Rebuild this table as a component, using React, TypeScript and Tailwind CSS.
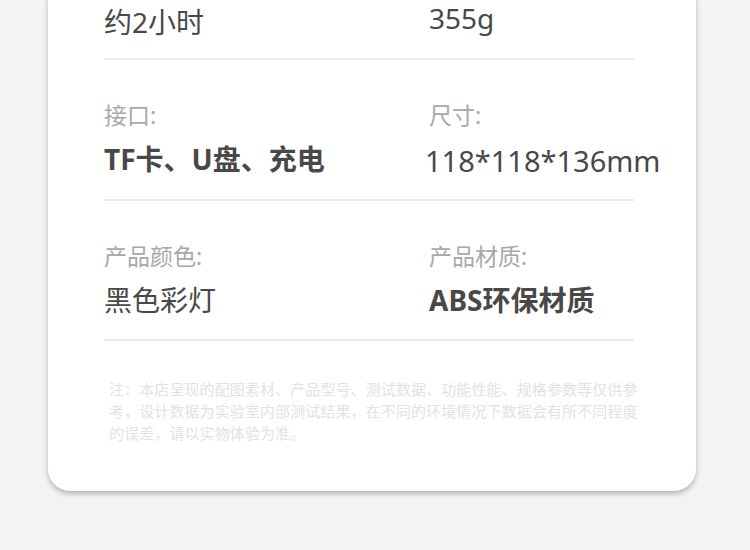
import React from "react";

const font = { fontFamily: '"Noto Sans", "Noto Sans CJK SC", sans-serif' };

function Row({
  l1,
  v1,
  l2,
  v2,
  bold1,
  bold2,
  big2,
  pb,
}: {
  l1: string;
  v1: string;
  l2: string;
  v2: string;
  bold1?: boolean;
  bold2?: boolean;
  big2?: boolean;
  pb: string;
}) {
  return (
    <div className={`grid grid-cols-[325px_1fr] border-b-2 border-[#ebebeb] pt-[43px] ${pb}`}>
      <div className="flex flex-col">
        <div className="text-[23px] leading-[24px] text-[#a8a8a8]">{l1}</div>
        <div
          className={`mt-[17px] text-[28px] leading-[30px] text-[#484848] whitespace-nowrap ${
            bold1 ? "font-bold" : ""
          }`}
        >
          {v1}
        </div>
      </div>
      <div className="flex flex-col">
        <div className="text-[23px] leading-[24px] text-[#a8a8a8]">{l2}</div>
        <div
          className={`leading-[30px] text-[#484848] whitespace-nowrap ${
            bold2 ? "font-bold" : ""
          } ${big2 ? "text-[29px] ml-[-4px] mt-[19px]" : "mt-[17px] text-[28px]"}`}
        >
          {v2}
        </div>
      </div>
    </div>
  );
}

export default function App() {
  return (
    <div className="w-[750px] h-[550px] bg-[#f3f3f3] overflow-hidden" style={font}>
      <div className="ml-[48px] mr-[54px] mt-[-20px] bg-white rounded-[22px] shadow-[0_3px_5px_rgba(0,0,0,0.25)] pl-[56px] pr-[62px] pb-[47px]">
        <div className="grid grid-cols-[325px_1fr] border-b-2 border-[#ebebeb] pt-[27px] pb-[21px]">
          <div className="text-[28px] leading-[30px] text-[#484848] whitespace-nowrap">约2小时</div>
          <div className="text-[28px] leading-[30px] text-[#484848] whitespace-nowrap mt-[-4px]">355g</div>
        </div>
        <Row l1="接口:" v1="TF卡、U盘、充电" l2="尺寸:" v2="118*118*136mm" bold1 big2 pb="pb-[23px]" />
        <Row l1="产品颜色:" v1="黑色彩灯" l2="产品材质:" v2="ABS环保材质" bold2 pb="pb-[24px]" />
        <div className="mt-[37px] pl-[5px] text-[15px] leading-[22px] tracking-[0.1px] text-[#e2e2e2]">
          <div className="whitespace-nowrap">注：本店呈现的配图素材、产品型号、测试数据、功能性能、规格参数等仅供参</div>
          <div className="whitespace-nowrap">考，设计数据为实验室内部测试结果，在不同的环境情况下数据会有所不同程度</div>
          <div className="whitespace-nowrap">的误差，请以实物体验为准。</div>
        </div>
      </div>
    </div>
  );
}
